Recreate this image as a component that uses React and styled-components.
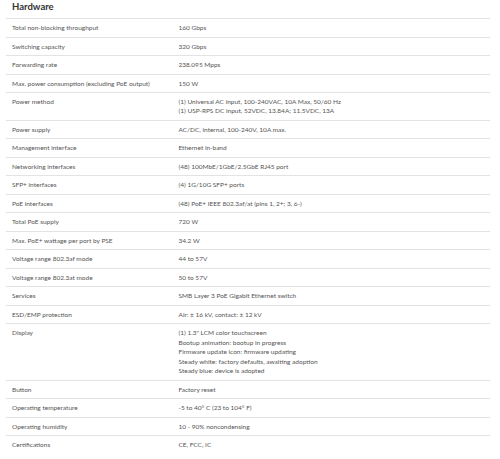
import React from 'react';
import styled, { createGlobalStyle } from 'styled-components';

const GlobalStyle = createGlobalStyle`
  html, body {
    margin: 0;
    padding: 0;
    background: #fff;
  }
  body {
    font-family: Lato, "Open Sans", sans-serif;
    -webkit-font-smoothing: antialiased;
  }
`;

const specs = [
  ['Total non-blocking throughput', ['160 Gbps']],
  ['Switching capacity', ['320 Gbps']],
  ['Forwarding rate', ['238.095 Mpps']],
  ['Max. power consumption (excluding PoE output)', ['150 W']],
  ['Power method', [
    '(1) Universal AC input, 100-240VAC, 10A Max, 50/60 Hz',
    '(1) USP-RPS DC input, 52VDC, 13.84A; 11.5VDC, 13A',
  ]],
  ['Power supply', ['AC/DC, internal, 100-240V, 10A max.']],
  ['Management interface', ['Ethernet in-band']],
  ['Networking interfaces', ['(48) 100MbE/1GbE/2.5GbE RJ45 port']],
  ['SFP+ interfaces', ['(4) 1G/10G SFP+ ports']],
  ['PoE interfaces', ['(48) PoE+ IEEE 802.3af/at (pins 1, 2+; 3, 6-)']],
  ['Total PoE supply', ['720 W']],
  ['Max. PoE+ wattage per port by PSE', ['34.2 W']],
  ['Voltage range 802.3af mode', ['44 to 57V']],
  ['Voltage range 802.3at mode', ['50 to 57V']],
  ['Services', ['SMB Layer 3 PoE Gigabit Ethernet switch']],
  ['ESD/EMP protection', ['Air: ± 16 kV, contact: ± 12 kV']],
  ['Display', [
    '(1) 1.3" LCM color touchscreen',
    'Bootup animation: bootup in progress',
    'Firmware update icon: firmware updating',
    'Steady white: factory defaults, awaiting adoption',
    'Steady blue: device is adopted',
  ]],
  ['Button', ['Factory reset']],
  ['Operating temperature', ['-5 to 40° C (23 to 104° F)']],
  ['Operating humidity', ['10 - 90% noncondensing']],
  ['Certifications', ['CE, FCC, IC']],
];

const Wrapper = styled.section`
  width: 484px;
  padding: 0 10px 0 6px;
`;

const Heading = styled.h2`
  margin: 0;
  padding: 0 6px;
  height: 18px;
  font-size: 9.5px;
  line-height: 14px;
  font-weight: 700;
  color: #333;
  border-bottom: 1px solid #e3e3e3;
`;

const Table = styled.div`
  display: flex;
  flex-direction: column;
`;

const Row = styled.div`
  display: grid;
  grid-template-columns: 166.5px 1fr;
  padding: 4.05px 6px;
  border-bottom: ${({ $last }) => ($last ? 'none' : '1px solid #e3e3e3')};
  font-size: 6.5px;
  line-height: 9.4px;
  color: #555;
`;

const Label = styled.div`
  color: #555;
`;

const Value = styled.div`
  display: flex;
  flex-direction: column;
  color: #555;
`;

export default function App() {
  return (
    <>
      <GlobalStyle />
      <Wrapper>
        <Heading>Hardware</Heading>
        <Table>
          {specs.map(([label, lines], i) => (
            <Row key={label} $last={i === specs.length - 1}>
              <Label>{label}</Label>
              <Value>
                {lines.map((line) => (
                  <span key={line}>{line}</span>
                ))}
              </Value>
            </Row>
          ))}
        </Table>
      </Wrapper>
    </>
  );
}
